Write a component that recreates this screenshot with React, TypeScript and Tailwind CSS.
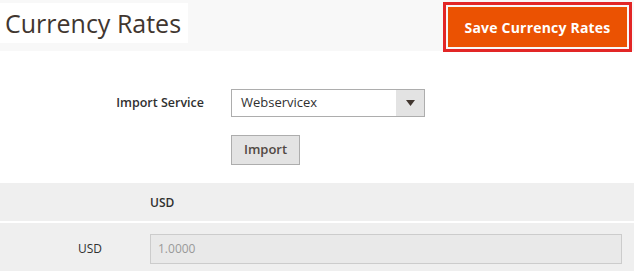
import React from "react";

export default function App() {
  return (
    <div
      className="w-[634px] h-[271px] overflow-hidden bg-white text-[#303030]"
      style={{ fontFamily: '"Open Sans", sans-serif' }}
    >
      {/* Header */}
      <div className="h-[51px] bg-[#f8f8f8] flex items-start justify-between">
        <div className="mt-[3px] h-[40px] w-[188px] bg-white flex items-center pl-[5px]">
          <h1 className="text-[25px] font-normal leading-none text-[#41362f]">
            Currency Rates
          </h1>
        </div>
        <div className="mt-[7px] mr-[7px]">
          <button className="h-[40px] w-[179px] bg-[#eb5202] text-white text-[14px] font-bold outline-[3px] outline-solid outline-[#e22626] outline-offset-2 flex items-center justify-center tracking-[0.2px]">
            Save Currency Rates
          </button>
        </div>
      </div>

      {/* Form */}
      <div className="pt-[38px] h-[132px]">
        <div className="flex items-center">
          <label className="w-[204px] text-right text-[12.5px] font-semibold text-[#303030]">
            Import Service
          </label>
          <div className="ml-[27px] w-[194px] h-[28px] border border-[#adadad] bg-white flex items-stretch">
            <div className="flex-1 pl-[9px] text-[13px] flex items-center text-[#303030]">
              Webservicex
            </div>
            <div className="w-[28px] bg-[#e3e3e3] flex items-center justify-center">
              <svg width="9" height="6" viewBox="0 0 9 6">
                <path d="M0 0 H9 L4.5 6 Z" fill="#41362f" />
              </svg>
            </div>
          </div>
        </div>
        <div className="mt-[18px] pl-[231px]">
          <button className="h-[30px] w-[69px] bg-[#e3e3e3] border border-[#adadad] text-[13px] font-semibold text-[#514943] flex items-center justify-center">
            Import
          </button>
        </div>
      </div>

      {/* Table */}
      <div className="bg-[#efefef]">
        <div className="h-[40px] flex items-center border-b-2 border-white pt-[2px]">
          <div className="pl-[150px] text-[12px] font-semibold text-[#303030]">USD</div>
        </div>
        <div className="h-[48px] flex items-start pt-[11px]">
          <div className="w-[102px] text-right text-[12px] text-[#303030] h-[30px] flex items-center justify-end">
            USD
          </div>
          <div className="ml-[48px] w-[472px] h-[30px] border border-[#cccccc] bg-[#e9e9e9] flex items-center pl-[7px] text-[12px] text-[#999999]">
            1.0000
          </div>
        </div>
      </div>
    </div>
  );
}
